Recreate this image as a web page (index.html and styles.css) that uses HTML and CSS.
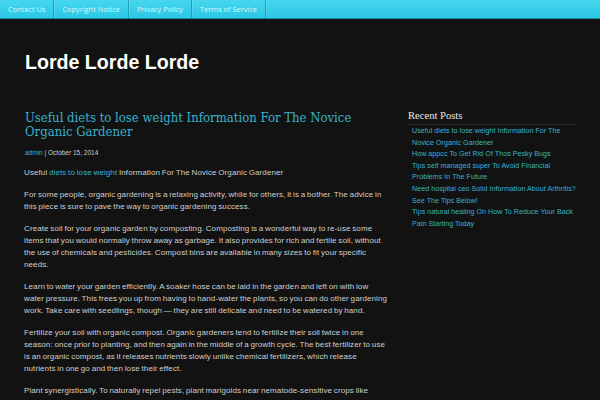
FILE: index.html
```html
<!DOCTYPE html>
<html>
<head>
<meta charset="utf-8">
<link rel="stylesheet" href="styles.css">
</head>
<body>
<nav class="topnav">
  <a class="navitem" href="#">Contact Us</a>
  <a class="navitem" href="#">Copyright Notice</a>
  <a class="navitem" href="#">Privacy Policy</a>
  <a class="navitem" href="#">Terms of Service</a>
</nav>
<header class="masthead">
  <h1 class="sitetitle">Lorde Lorde Lorde</h1>
</header>
<div class="wrap">
  <main class="content">
    <h2 class="posttitle">Useful diets to lose weight Information For The Novice Organic Gardener</h2>
    <div class="meta"><a href="#">admin</a> | October 15, 2014</div>
    <p>Useful <a href="#">diets to lose weight</a> Information For The Novice Organic Gardener</p>
    <p>For some people, organic gardening is a relaxing activity, while for others, it is a bother. The advice in this piece is sure to pave the way to organic gardening success.</p>
    <p>Create soil for your organic garden by composting. Composting is a wonderful way to re-use some items that you would normally throw away as garbage. It also provides for rich and fertile soil, without the use of chemicals and pesticides. Compost bins are available in many sizes to fit your specific needs.</p>
    <p>Learn to water your garden efficiently. A soaker hose can be laid in the garden and left on with low water pressure. This frees you up from having to hand-water the plants, so you can do other gardening work. Take care with seedlings, though — they are still delicate and need to be watered by hand.</p>
    <p>Fertilize your soil with organic compost. Organic gardeners tend to fertilize their soil twice in one season: once prior to planting, and then again in the middle of a growth cycle. The best fertilizer to use is an organic compost, as it releases nutrients slowly unlike chemical fertilizers, which release nutrients in one go and then lose their effect.</p>
    <p>Plant synergistically. To naturally repel pests, plant marigolds near nematode-sensitive crops like tomatoes and potatoes. Try growing garlic close to roses to keep beetles and aphids away from them.</p>
  </main>
  <aside class="sidebar">
    <h3 class="widgettitle">Recent Posts</h3>
    <ul class="recent">
      <li><a href="#">Useful diets to lose weight Information For The Novice Organic Gardener</a></li>
      <li><a href="#">How appcc To Get Rid Of Thos Pesky Bugs</a></li>
      <li><a href="#">Tips self managed super To Avoid Financial Problems In The Future</a></li>
      <li><a href="#">Need hospital ceo Solid Information About Arthritis? See The Tips Below!</a></li>
      <li><a href="#">Tips natural healing On How To Reduce Your Back Pain Starting Today</a></li>
    </ul>
  </aside>
</div>
</body>
</html>
```
FILE: styles.css
```css
html, body {
  margin: 0;
  padding: 0;
  background: #121212;
  overflow: hidden;
}
body {
  font-family: "Liberation Sans", Arial, sans-serif;
  color: #cfcfcf;
}
a { text-decoration: none; color: #38b3cc; }

.topnav {
  display: flex;
  height: 18px;
  background: linear-gradient(#47d7ef, #2ac7e5);
  border-bottom: 1px solid #1b8ea3;
}
.navitem {
  display: flex;
  align-items: center;
  padding: 0 8px;
  font-family: "Open Sans", sans-serif;
  font-size: 7.4px;
  color: rgba(255,255,255,0.82);
  border-right: 1px solid #239fb7;
  box-shadow: 1px 0 0 rgba(255,255,255,0.15);
}

.masthead {
  padding: 31px 25px 0;
  height: 58px;
}
.sitetitle {
  margin: 0;
  font-family: "Liberation Sans", Arial, sans-serif;
  font-size: 19.6px;
  font-weight: bold;
  color: #ffffff;
  line-height: 24px;
}

.wrap {
  display: flex;
  padding: 0 22px 0 24px;
  gap: 20px;
}
.content {
  width: 364px;
  flex: none;
}
.posttitle {
  margin: 0 0 0 1px;
  padding-top: 3px;
  font-family: "DejaVu Serif", serif;
  font-stretch: condensed;
  font-weight: normal;
  font-size: 13px;
  line-height: 14px;
  color: #38b3cc;
}
.meta {
  margin: 10px 0 0 1px;
  font-size: 6.5px;
  color: #cfcfcf;
}
.content p {
  margin: 10px 0 0;
  font-size: 8px;
  line-height: 12px;
  letter-spacing: 0.1px;
  word-spacing: -0.6px;
}
.meta + p { margin-top: 11px; }

.sidebar {
  flex: 1;
  padding-top: 1px;
}
.widgettitle {
  margin: 0;
  font-family: "Liberation Serif", "Times New Roman", serif;
  font-weight: normal;
  font-size: 10.6px;
  line-height: 14px;
  color: #e6e6e6;
  padding-bottom: 1px;
  border-bottom: 1px solid #262626;
  margin-right: 2px;
}
.recent {
  list-style: none;
  margin: 1px 0 0;
  padding: 0 0 0 4px;
}
.recent li {
  font-size: 7.15px;
  line-height: 11.6px;
  letter-spacing: 0.02px;
}
```
